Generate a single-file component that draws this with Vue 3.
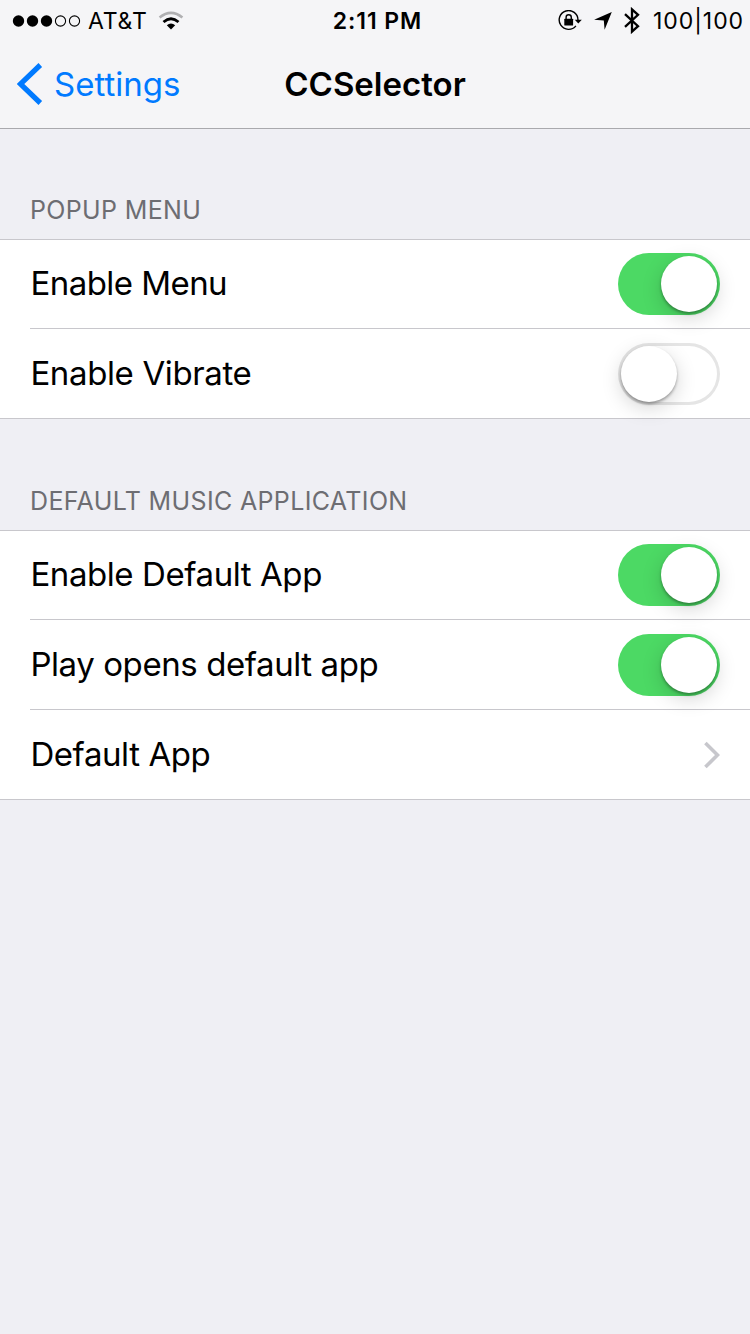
<script setup>
const groups = [
  {
    title: 'POPUP MENU',
    cls: 'popup',
    rows: [
      { label: 'Enable Menu', cls: 'r1', type: 'switch', on: true },
      { label: 'Enable Vibrate', cls: 'r2', type: 'switch', on: false },
    ],
  },
  {
    title: 'DEFAULT MUSIC APPLICATION',
    cls: 'music',
    rows: [
      { label: 'Enable Default App', cls: 'r3', type: 'switch', on: true },
      { label: 'Play opens default app', cls: 'r4', type: 'switch', on: true },
      { label: 'Default App', cls: 'r5', type: 'link' },
    ],
  },
]
</script>

<template>
  <div class="screen">
    <header class="bar">
      <div class="status">
        <div class="side">
          <svg class="dots" width="70" height="14" viewBox="0 0 70 14">
            <circle cx="6.5" cy="7" r="5.7" />
            <circle cx="20.5" cy="7" r="5.7" />
            <circle cx="34.5" cy="7" r="5.7" />
            <circle class="ring" cx="48.5" cy="7" r="5.1" />
            <circle class="ring" cx="62.5" cy="7" r="5.1" />
          </svg>
          <span class="carrier">AT&amp;T</span>
          <svg class="wifi" width="26" height="20" viewBox="0 0 26 20">
            <path d="M1.6 6.6 Q13 -2.9 24.4 6.6" fill="none" stroke="#b0b0b2" stroke-width="2.6" />
            <path d="M5.5 11 Q13 4.6 20.5 11" fill="none" stroke="#000" stroke-width="2.8" />
            <path d="M8.8 14.3 Q13 10.8 17.2 14.3 L13 18.6 Z" />
          </svg>
        </div>
        <span class="time">2:11 PM</span>
        <div class="side right">
          <svg class="lock" width="24" height="22" viewBox="0 0 24 22">
            <path d="M17.9 15.9 A9.4 9.4 0 1 1 20 10" fill="none" stroke="#000" stroke-width="1.4" />
            <path d="M16.8 9.8 H23.8 L20.3 13.6 Z" />
            <rect x="6.3" y="8.8" width="8.8" height="6.6" rx=".5" />
            <path d="M8.1 9.4 V7.4 a2.6 2.6 0 0 1 5.2 0 V9.4" fill="none" stroke="#000" stroke-width="1.4" />
          </svg>
          <svg class="arrow" width="18" height="18" viewBox="0 0 18 18">
            <path d="M17.8 .1 L10.6 17.8 L9.8 8.4 L.1 7.8 Z" />
          </svg>
          <svg class="bt" width="16" height="27" viewBox="0 0 16 27">
            <path d="M1 7.2 L14 19.2 L8 24.6 V2.4 L14 7.8 L1 19.8" fill="none" stroke="#000" stroke-width="2.3" />
          </svg>
          <span class="battery">100|100</span>
        </div>
      </div>
      <div class="nav">
        <a class="back">
          <svg width="26" height="42" viewBox="0 0 26 42">
            <path d="M23.3 2 L3.4 21 L23.3 40" fill="none" stroke="#007aff" stroke-width="5.2" />
          </svg>
          <span>Settings</span>
        </a>
        <h1>CCSelector</h1>
      </div>
    </header>

    <section v-for="g in groups" :key="g.title" :class="['group', g.cls]">
      <h2>{{ g.title }}</h2>
      <div class="list">
        <div v-for="r in g.rows" :key="r.label" class="row">
          <span :class="['label', r.cls]">{{ r.label }}</span>
          <div v-if="r.type === 'switch'" :class="['switch', { on: r.on }]">
            <div class="knob"></div>
          </div>
          <svg v-else class="chevron" width="17" height="28" viewBox="0 0 17 28">
            <path d="M2.4 1.9 L14.5 14 L2.4 26.1" fill="none" stroke="#c7c7cc" stroke-width="3.6" />
          </svg>
        </div>
      </div>
    </section>
  </div>
</template>

<style>
body {
  margin: 0;
  background: #efeff4;
}
</style>

<style scoped>
.screen {
  width: 750px;
  height: 1334px;
  overflow: hidden;
  background: #efeff4;
  color: #000;
  font-family: Inter, Roboto, "Liberation Sans", sans-serif;
  white-space: nowrap;
}
.bar {
  box-sizing: border-box;
  height: 129px;
  background: #f5f5f7;
  border-bottom: 1px solid #a9a9ad;
}
.status {
  display: grid;
  grid-template-columns: 1fr auto 1fr;
  height: 41px;
  font-size: 23px;
  line-height: 42px;
}
.side {
  display: flex;
  align-items: center;
  height: 41px;
  padding-left: 12px;
}
.ring {
  fill: none;
  stroke: #000;
  stroke-width: 1.1;
}
.carrier {
  margin-left: 6px;
  width: 59px;
  letter-spacing: 0.8px;
}
.wifi {
  margin-left: 10.5px;
}
.time {
  font-weight: 600;
  letter-spacing: 0.9px;
  padding-left: 5px;
}
.right {
  justify-content: flex-end;
  padding: 0 6px 0 0;
}
.arrow {
  margin-left: 12px;
}
.bt {
  margin-left: 12px;
}
.battery {
  margin-left: 13px;
  width: 91px;
  letter-spacing: 0.95px;
}
.nav {
  display: grid;
  grid-template-columns: 1fr auto 1fr;
  align-items: center;
  height: 86px;
}
.back {
  display: flex;
  align-items: center;
  padding-left: 17px;
  color: #007aff;
  font-size: 33px;
}
.back span {
  margin-left: 11px;
}
h1 {
  margin: 0;
  font-size: 33px;
  font-weight: 600;
}
.group h2 {
  box-sizing: border-box;
  margin: 0;
  padding: 65px 0 0 30px;
  height: 110px;
  color: #6d6d72;
  font-size: 25px;
  font-weight: 400;
  letter-spacing: 0.35px;
  line-height: 32px;
}
.music h2 {
  height: 111px;
  padding-top: 66px;
}
.list {
  border-top: 1px solid #c8c7cc;
  border-bottom: 1px solid #c8c7cc;
  background: #fff;
}
.row {
  display: flex;
  align-items: center;
  justify-content: space-between;
  height: 88px;
  padding: 0 30px 0 0;
  margin-left: 30px;
}
.row + .row {
  border-top: 1px solid #c8c7cc;
  padding-top: 1px;
}
.label {
  padding: 0 0 2px 0.4px;
  font-size: 33px;
  line-height: 40px;
  letter-spacing: -0.42px;
}
.label.r1 {
  letter-spacing: -0.54px;
}
.label.r2 {
  letter-spacing: -0.37px;
}
.switch {
  box-sizing: border-box;
  width: 102px;
  height: 62px;
  padding: 3px;
  border-radius: 31px;
  box-shadow: inset 0 0 0 3px #e5e5e5;
}
.switch.on {
  background: #4cd964;
  box-shadow: none;
}
.knob {
  width: 56px;
  height: 56px;
  border-radius: 50%;
  background: #fff;
  box-shadow: 0 2px 3px rgba(0, 0, 0, 0.32), 0 6px 20px rgba(0, 0, 0, 0.17);
}
.on .knob {
  margin-left: 40px;
}
</style>
